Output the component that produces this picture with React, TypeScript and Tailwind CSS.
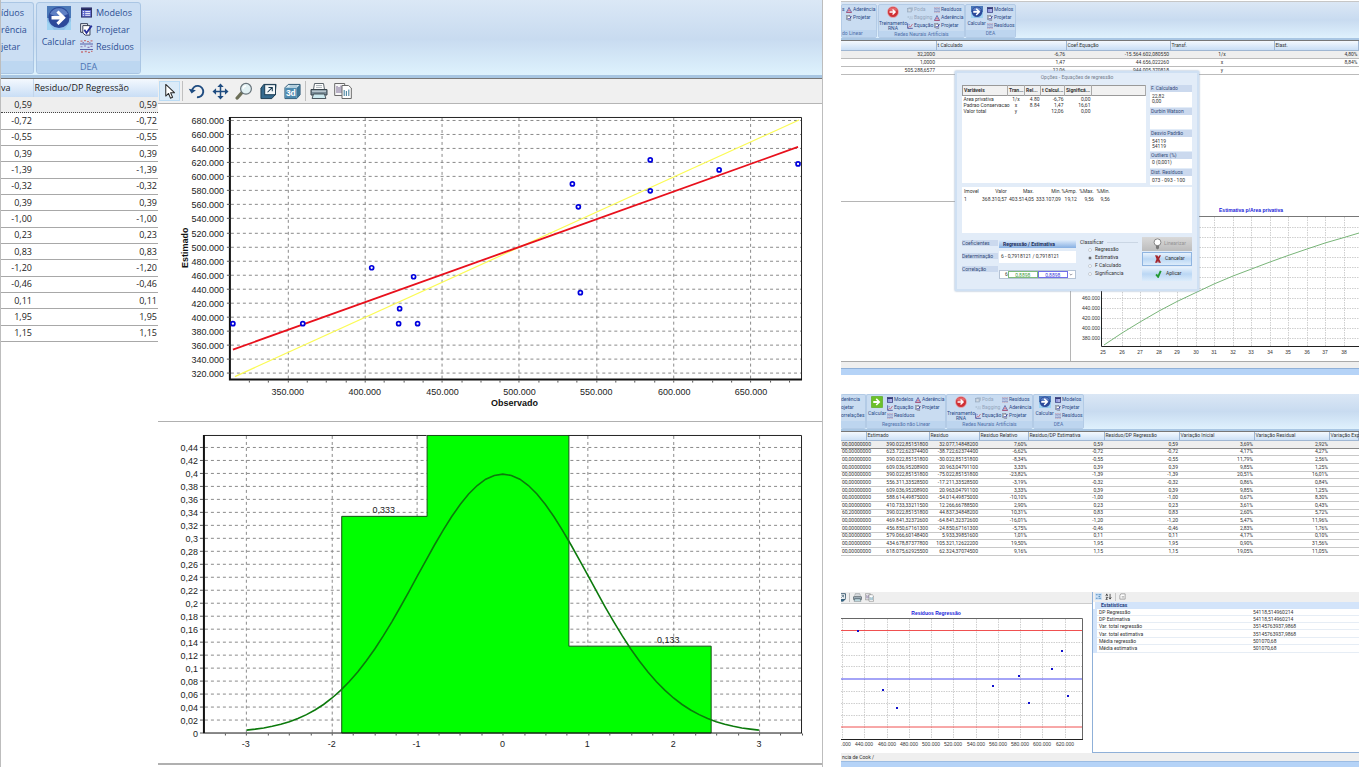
import React from "react";

type IconProps = { className?: string };

/* ---------- ribbon icons ---------- */

const ListIcon = ({ className }: IconProps) => (
  <svg viewBox="0 0 12 12" className={className} aria-hidden="true">
    <rect x="0.5" y="1" width="11" height="10" fill="#5a63c8" stroke="#2c2f66" />
    <rect x="1" y="1.5" width="10" height="1.8" fill="#20234f" />
    <path d="M2 5h1.4M2 7h1.4M2 9h1.4M4.6 5h5.4M4.6 7h5.4M4.6 9h5.4" stroke="#fff" strokeWidth="1" />
  </svg>
);

const ProjectIcon = ({ className }: IconProps) => (
  <svg viewBox="0 0 12 12" className={className} aria-hidden="true">
    <path d="M0.6 0.6h6.4v8h-6.4z" fill="#f5f7fb" stroke="#333c52" strokeWidth="0.9" />
    <path d="M2.6 2.4h6.6v8.8h-4.4l-2.2-2z" fill="#fff" stroke="#333c52" strokeWidth="0.9" />
    <path d="M4 6.2l2 3 4.8-6.8" fill="none" stroke="#26309a" strokeWidth="1.7" />
  </svg>
);

const ResidualIcon = ({ className }: IconProps) => (
  <svg viewBox="0 0 13 13" className={className} aria-hidden="true">
    <path d="M0 4h13M0 9.5h13" stroke="#5661a8" strokeWidth="1.1" />
    <path d="M0.5 1.2h2M4 0.7h2M7 1.6h2M10.5 0.8h2M1 12h2M4.8 11.5h2M8 12.3h2M11 11.4h1.5" stroke="#c6777e" strokeWidth="1.3" />
    <path d="M0.5 6.8h2M4 6h2M7.5 7.4h2M10.5 6.4h2M2.5 2.6h1.5M9 2.7h1.5" stroke="#8f7bb8" strokeWidth="1.1" />
  </svg>
);

const AdherenceIcon = ({ className }: IconProps) => (
  <svg viewBox="0 0 12 12" className={className} aria-hidden="true">
    <path d="M6 1L11 10.5H1z" fill="#e9cfe0" stroke="#45509c" strokeWidth="1.4" />
    <path d="M0.5 10.8h11" stroke="#b34466" strokeWidth="1.6" />
    <circle cx="6" cy="6.5" r="1.4" fill="#c23a4e" />
  </svg>
);

const EquationIcon = ({ className }: IconProps) => (
  <svg viewBox="0 0 12 12" className={className} aria-hidden="true">
    <path d="M1.3 0.5v10.2h10.2" fill="none" stroke="#3a3f8e" strokeWidth="1.5" />
    <path d="M2.5 9.5L5 6.5l2 1.4L11 2" fill="none" stroke="#c0405a" strokeWidth="1.3" />
    <path d="M3 3.2h3" stroke="#5a63c8" />
  </svg>
);

const GhostIcon = ({ className }: IconProps) => (
  <svg viewBox="0 0 12 12" className={className} aria-hidden="true">
    <rect x="1" y="3" width="8" height="7" fill="#b4c2d3" stroke="#8fa1b6" />
    <path d="M3 1.5h8v6" fill="none" stroke="#8fa1b6" />
    <path d="M3 5.5h4M3 7.5h4" stroke="#fff" />
  </svg>
);

const DotsIcon = ({ className }: IconProps) => (
  <svg viewBox="0 0 12 12" className={className} aria-hidden="true">
    <path d="M1 4h3M5.5 4h2M9 4h2M5 7.5h2M9 7.5h2" stroke="#98a8bc" strokeWidth="1.6" />
  </svg>
);

const ArrowTile = ({ className }: IconProps) => (
  <svg viewBox="0 0 24 24" className={className} aria-hidden="true">
    <rect width="24" height="24" fill="#8fc0e8" />
    <path d="M0 0h24v12H0z" fill="#4a78b8" />
    <path d="M0 24v-9l7 9zM24 24v-9l-7 9z" fill="#9fd3f2" />
    <circle cx="12" cy="11.5" r="10.6" fill="#2c4a9a" />
    <path d="M3 8a10 10 0 0 1 18 0q-9 5-18 0z" fill="#5f80c4" />
    <path d="M4.5 10h8.2L9.4 6.6l2.1-2.1 7.3 7.2-7.3 7.2-2.1-2.1 3.3-3.4H4.5z" fill="#fff" />
  </svg>
);

const GreenArrowTile = ({ className }: IconProps) => (
  <svg viewBox="0 0 24 24" className={className} aria-hidden="true">
    <rect x="0.5" y="0.5" width="23" height="23" rx="2" fill="#6cc02a" stroke="#4b9a1c" />
    <path d="M4.5 10.2h8.2L9.4 6.8l2.1-2.1 7.3 7.2-7.3 7.2-2.1-2.1 3.3-3.2H4.5z" fill="#fff" />
  </svg>
);

const RedArrowDisc = ({ className }: IconProps) => (
  <svg viewBox="0 0 24 24" className={className} aria-hidden="true">
    <circle cx="12" cy="12" r="11" fill="#cf2f34" stroke="#e7b6bb" strokeWidth="1.4" />
    <path d="M3 8a10 10 0 0 1 18 0q-9 5-18 0z" fill="#e5666a" />
    <path d="M5 10.6h7.8l-2.6-2.8 1.8-1.8 6.2 6-6.2 6-1.8-1.8 2.6-2.8H5z" fill="#fff" />
  </svg>
);

/* ---------- chart toolbar icons ---------- */

const CursorIcon = ({ className }: IconProps) => (
  <svg viewBox="0 0 16 18" className={className} aria-hidden="true">
    <path d="M4 1.5v12.4l3-2.8 2 5 2.3-1-2.1-4.8h4.1z" fill="#fff" stroke="#2b2b2b" strokeWidth="1.1" strokeLinejoin="round" />
  </svg>
);

const UndoIcon = ({ className }: IconProps) => (
  <svg viewBox="0 0 18 18" className={className} aria-hidden="true">
    <path d="M4.2 8.4A6 6 0 1 1 9.5 15" fill="none" stroke="#1f4c80" strokeWidth="2" />
    <path d="M0.8 6.2l3 5 4.6-3.6z" fill="#1f4c80" />
  </svg>
);

const MoveIcon = ({ className }: IconProps) => (
  <svg viewBox="0 0 18 18" className={className} aria-hidden="true">
    <path d="M9 3v12M3 9h12" stroke="#1f4c80" strokeWidth="1.6" />
    <path d="M9 0.5l3.4 3.8H5.6zM9 17.5l3.4-3.8H5.6zM0.5 9l3.8-3.4v6.8zM17.5 9l-3.8-3.4v6.8z" fill="#1f4c80" />
  </svg>
);

const LensIcon = ({ className }: IconProps) => (
  <svg viewBox="0 0 18 18" className={className} aria-hidden="true">
    <path d="M7 10.5L2.2 16" stroke="#6d6f58" strokeWidth="3.4" strokeLinecap="round" />
    <circle cx="11" cy="6.8" r="5.4" fill="#e2f1f4" stroke="#67737a" strokeWidth="1.2" />
    <path d="M8.2 6.8A2.8 2.8 0 0 1 11 4" fill="none" stroke="#fff" strokeWidth="1.4" />
  </svg>
);

const CubeIcon = ({ className }: IconProps) => (
  <svg viewBox="0 0 18 18" className={className} aria-hidden="true">
    <path d="M1 5.5l3-4h13l-1 11-3.5 4H1z" fill="#356a8e" stroke="#17384f" strokeWidth="1" />
    <rect x="5" y="1.8" width="11.4" height="10.6" fill="#f4f8fa" stroke="#17384f" />
    <path d="M8 9.8l4.6-4.6M9 4.8h4v4" fill="none" stroke="#17384f" strokeWidth="1.1" />
  </svg>
);

const Cube3dIcon = ({ className }: IconProps) => (
  <svg viewBox="0 0 18 18" className={className} aria-hidden="true">
    <path d="M1 5l3.5-3.5H17v11L13.5 16.5H1z" fill="#d9eaf2" stroke="#23506e" strokeWidth="1" />
    <path d="M13.5 5L17 1.5v11l-3.5 4z" fill="#3f7596" />
    <rect x="1.3" y="5" width="12.2" height="11" fill="#4f8bb0" />
    <text x="2" y="14" fontSize="9" fontWeight="700" fontFamily="Liberation Sans" fill="#fff">3d</text>
    <path d="M6 3.2h8" stroke="#7fa9c0" strokeWidth="0.9" />
  </svg>
);

const PrinterIcon = ({ className }: IconProps) => (
  <svg viewBox="0 0 18 18" className={className} aria-hidden="true">
    <path d="M4.5 1.5h9l1 6h-11z" fill="#fdfdfd" stroke="#5d666d" />
    <path d="M6 3.5h6M6 5.4h6" stroke="#98a3ab" strokeWidth="0.8" />
    <path d="M1 7.5h16v5.5H1z" fill="#7b8d99" stroke="#39454d" />
    <path d="M2 9.2h14" stroke="#d4e0e6" />
    <path d="M3.5 12h11l1.4 4.5H2.1z" fill="#cdeaf0" stroke="#39454d" strokeWidth="0.9" />
  </svg>
);

const PagesIcon = ({ className }: IconProps) => (
  <svg viewBox="0 0 18 18" className={className} aria-hidden="true">
    <path d="M0.7 1.5h10v12H0.7z" fill="#f7f7f7" stroke="#6a6a6a" />
    <path d="M3 4v7M5 5v6M7 3.5v7.5" stroke="#7a6a94" strokeWidth="1" />
    <path d="M8 3.5h6.5L17.3 6v10.5H8z" fill="#fff" stroke="#6a6a6a" />
    <path d="M10.2 14V8M12.4 14v-5M14.8 14V7.5" stroke="#4d87a2" strokeWidth="1.1" />
  </svg>
);

/* ---------- data ---------- */

const residuals = ["0,59", "-0,72", "-0,55", "0,39", "-1,39", "-0,32", "0,39", "-1,00", "0,23", "0,83", "-1,20", "-0,46", "0,11", "1,95", "1,15"];

const detailRows: string[][] = [
  ["00,00000000", "390.022,85151800", "32.077,14848200", "7,60%", "0,59", "0,59", "3,69%", "2,92%"],
  ["00,00000000", "623.722,62374400", "-38.722,62374400", "-6,62%", "-0,72", "-0,72", "4,17%", "4,27%"],
  ["00,00000000", "390.022,85151800", "-30.022,85151800", "-8,34%", "-0,55", "-0,55", "11,79%", "2,56%"],
  ["00,00000000", "609.036,95208900", "20.963,04791100", "3,33%", "0,39", "0,39", "9,85%", "1,25%"],
  ["00,00000000", "390.022,85151800", "-75.022,85151800", "-23,82%", "-1,39", "-1,39", "20,51%", "16,01%"],
  ["00,00000000", "556.311,33528500", "-17.211,33528500", "-3,19%", "-0,32", "-0,32", "0,86%", "0,84%"],
  ["00,00000000", "609.036,95208900", "20.963,04791100", "3,33%", "0,39", "0,39", "9,85%", "1,25%"],
  ["00,00000000", "588.614,49875000", "-54.014,49875000", "-10,10%", "-1,00", "-1,00", "0,67%", "8,30%"],
  ["00,00000000", "410.733,33211500", "12.266,66788500", "2,90%", "0,23", "0,23", "3,61%", "0,43%"],
  ["60,20000000", "390.022,85151800", "44.837,34848200", "10,31%", "0,83", "0,83", "2,60%", "5,72%"],
  ["00,00000000", "469.841,32372600", "-64.841,32372600", "-16,01%", "-1,20", "-1,20", "5,47%", "11,96%"],
  ["00,00000000", "456.850,67161300", "-24.850,67161300", "-5,75%", "-0,46", "-0,46", "2,83%", "1,76%"],
  ["00,00000000", "579.066,60148400", "5.933,39851600", "1,01%", "0,11", "0,11", "4,17%", "0,10%"],
  ["00,00000000", "434.678,87377800", "105.321,12622200", "19,50%", "1,95", "1,95", "0,90%", "31,56%"],
  ["00,00000000", "618.075,62925500", "62.324,37074500", "9,16%", "1,15", "1,15", "19,05%", "11,05%"],
];

const detailHeads = ["", "Estimado", "Residuo", "Residuo Relativo", "Residuo/DP Estimativa", "Residuo/DP Regressão", "Variação Inicial", "Variação Residual", "Variação Exp"];

const stats = [
  ["DP Regressão", "54118,514960214"],
  ["DP Estimativa", "54118,514960214"],
  ["Var. total regressão", "35145763937,9868"],
  ["Var. total estimativa", "35145763937,9868"],
  ["Média regressão", "501070,68"],
  ["Média estimativa", "501070,68"],
];

const range = (n: number) => Array.from({ length: n }, (_, i) => i);

/* ---------- charts ---------- */

const arial = "Liberation Sans, Arial, sans-serif";

const scatter = [
  [233, 324], [303, 324], [372, 268], [399, 324], [400, 309], [414, 277], [418, 324],
  [573, 184], [579, 207], [581, 293], [651, 160], [651, 191], [720, 170], [799, 164],
];

function AdherenceChart() {
  return (
    <svg viewBox="158 104 665 317" className="block h-auto w-full" role="img" aria-label="Estimado x Observado" fontFamily={arial} fontSize="9" fill="#222">
      <g stroke="#8a8a8a" strokeDasharray="3 3">
        {range(19).map((i) => <path key={i} d={`M231 ${Math.round(120 + i * 14.07) + 0.5}H802`} />)}
        {range(7).map((i) => <path key={i} d={`M${Math.round(287.5 + i * 77.3) + 0.5} 118V380`} />)}
      </g>
      <path d="M230 117.5H802.5V380" fill="none" stroke="#222" />
      <path d="M230 117V380H803" fill="none" stroke="#111" strokeWidth="2" />
      {range(19).map((i) => (
        <g key={i}>
          <path d={`M227 ${Math.round(120 + i * 14.07) + 0.5}h3`} stroke="#555" />
          <text x="224" y={Math.round(124 + i * 14.07)} textAnchor="end">{`${680 - i * 20}.000`}</text>
        </g>
      ))}
      {range(29).map((i) => <path key={i} d={`M${Math.round(249 + i * 19.32) + 0.5} 381v2`} stroke="#555" />)}
      {range(7).map((i) => <text key={i} x={Math.round(288 + i * 77.3)} y="395" textAnchor="middle">{`${350 + i * 50}.000`}</text>)}
      <path d="M235 377L800 120" stroke="#fbfb55" strokeWidth="1.2" />
      <path d="M233 350L799 147" stroke="#e8101c" strokeWidth="1.8" />
      {scatter.map(([x, y], i) => <circle key={i} cx={x} cy={y} r="2" fill="#fff" stroke="#0000dd" strokeWidth="1.7" />)}
      <text x="515" y="406" textAnchor="middle" fontWeight="700" fill="#111">Observado</text>
      <text x="0" y="0" transform="translate(188 248) rotate(-90)" textAnchor="middle" fontWeight="700" fill="#111">Estimado</text>
    </svg>
  );
}

const bell = range(61)
  .map((i) => {
    const z = -3 + i * 0.1;
    const d = Math.exp((-z * z) / 2) / Math.sqrt(2 * Math.PI);
    return `${i ? "L" : "M"}${(503.3 + z * 85.5).toFixed(1)} ${(733.5 - d * 650).toFixed(1)}`;
  })
  .join("");

function DistributionChart() {
  return (
    <svg viewBox="158 422 665 342" className="block h-auto w-full" role="img" aria-label="Distribuição dos resíduos" fontFamily={arial} fontSize="9" fill="#222">
      <g stroke="#8a8a8a" strokeDasharray="3 3">
        {range(22).map((i) => <path key={i} d={`M205 ${720.5 - i * 13}H802`} />)}
        {range(7).map((i) => <path key={i} d={`M${Math.round(246 + i * 85.6) + 0.5} 436V733`} />)}
      </g>
      <path d="M342 733.5V516.5H427.5V435.5H569.5V646.5H712V733.5z" fill="#00ff00" stroke="#145014" />
      <path d="M204 435.5H427M569 435.5H802.5V733.5" fill="none" stroke="#222" />
      <path d="M204 435V733.5" stroke="#111" strokeWidth="2" />
      <path d="M203 733.5H803" stroke="#111" strokeWidth="1" />
      {range(23).map((i) => (
        <g key={i}>
          <path d={`M200 ${733.5 - i * 13}h3`} stroke="#555" />
          <text x="198" y={737 - i * 13} textAnchor="end">{String(Number((i * 0.02).toFixed(2))).replace(".", ",")}</text>
        </g>
      ))}
      {range(28).map((i) => <path key={i} d={`M${Math.round(225 + i * 21.4) + 0.5} 734v2`} stroke="#555" />)}
      {range(7).map((i) => <text key={i} x={Math.round(246 + i * 85.6)} y="748" textAnchor="middle">{i - 3}</text>)}
      <path d={bell} fill="none" stroke="#0c7a0c" strokeWidth="1.6" />
      <text x="384" y="513" textAnchor="middle">0,333</text>
      <text x="669" y="643" textAnchor="middle">0,133</text>
    </svg>
  );
}

function EstimateChart() {
  return (
    <svg viewBox="1071 75 288 286" className="block h-auto w-full" role="img" aria-label="Estimativa p/Area privativa" fontFamily={arial} fontSize="5" fill="#333">
      <g stroke="#cfcfcf" strokeDasharray="1.5 1">
        {range(12).map((i) => <path key={i} d={`M1102 ${Math.round(338 - i * 10.1) + 0.5}H1359`} />)}
        {range(13).map((i) => <path key={i} d={`M${Math.round(1121.5 + i * 18.5) + 0.5} 217V346`} />)}
      </g>
      <path d="M1101 216.5H1359" stroke="#777" />
      <path d="M1101.5 216V346.5H1359" fill="none" stroke="#222" />
      {range(5).map((i) => <text key={i} x="1100" y={Math.round(340 - i * 10.1)} textAnchor="end">{`${380 + i * 20}.000`}</text>)}
      {range(14).map((i) => <text key={i} x={Math.round(1103 + i * 18.5)} y="354" textAnchor="middle">{25 + i}</text>)}
      <path d="M1104 345L1122 333L1140 322L1159 311L1177 301.5L1196 292.5L1214 284L1233 276L1251.5 269L1270 262L1288 255.5L1307 249L1325 243L1344 237.5L1359 233" fill="none" stroke="#79b579" />
      <text x="1251" y="212" textAnchor="middle" fontWeight="700" fill="#2020d8">Estimativa p/Area privativa</text>
    </svg>
  );
}

const residualDots = [[858, 631], [883, 690], [897, 708], [993, 686], [1019, 676], [1029, 703], [1052, 669], [1062, 651], [1068, 696]];

function ResidualChart() {
  return (
    <svg viewBox="841 604 251 149" className="block h-auto w-full" role="img" aria-label="Resíduos Regressão" fontFamily={arial} fontSize="5" fill="#333">
      <g stroke="#cfcfcf" strokeDasharray="1.5 1">
        {[642.5, 655.5, 666.5, 691.5, 703.5, 715.5].map((y) => <path key={y} d={`M841 ${y}H1083`} />)}
        {range(11).map((i) => <path key={i} d={`M${Math.round(842 + i * 22.25) + 0.5} 619V739`} />)}
      </g>
      <path d="M841 618.5H1082.5V739" fill="none" stroke="#666" />
      <path d="M841 739.5H1083" stroke="#222" />
      <path d="M841 630.5H1082M841 727H1082" stroke="#f05050" />
      <path d="M841 679H1082" stroke="#4a4af0" strokeWidth="1.2" />
      {residualDots.map(([x, y], i) => <rect key={i} x={x - 1} y={y - 1} width="2" height="2" fill="#1010cc" />)}
      {range(11).map((i) => <text key={i} x={i === 0 ? 841 : Math.round(842 + i * 22.25)} y="746" textAnchor={i === 0 ? "start" : "middle"}>{i === 0 ? ".000" : `${420 + i * 20}.000`}</text>)}
      <text x="936" y="615" textAnchor="middle" fontWeight="700" fill="#2020d8">Resíduos Regressão</text>
    </svg>
  );
}

/* ---------- compact ribbon ---------- */

type Entry = { icon?: React.ComponentType<IconProps>; label: string; off?: boolean };

function Entries({ items, className }: { items: Entry[]; className: string }) {
  return (
    <div className={`flex shrink-0 flex-col ${className}`}>
      {items.map(({ icon: Icon, label, off }) => (
        <button key={label} disabled={off} className={`flex h-2 items-center gap-px whitespace-nowrap text-left ${off ? "text-[#94a6bd]" : "text-[#2b4a86]"}`}>
          {Icon && <Icon className="size-[6px] shrink-0" />}
          {label}
        </button>
      ))}
    </div>
  );
}

function Group({ title, className, children }: { title: string; className: string; children: React.ReactNode }) {
  return (
    <section className={`flex shrink-0 flex-col overflow-hidden rounded-[2px] border border-[#b3cbe6] bg-[#c9dcf1] ${className}`}>
      <div className="flex h-[27px] pt-px">{children}</div>
      <h2 className="h-[7px] whitespace-nowrap bg-[#bdd5ef] leading-[6px] text-[#5070aa]">{title}</h2>
    </section>
  );
}

function BigButton({ icon: Icon, label, className }: { icon: React.ComponentType<IconProps>; label: string; className: string }) {
  return (
    <button className={`flex shrink-0 flex-col items-center text-center leading-[5px] text-[#2b4a86] ${className}`}>
      <Icon className="mb-[3px] size-3" />
      {label}
    </button>
  );
}

const modelos: Entry = { icon: ListIcon, label: "Modelos" };
const projetar: Entry = { icon: ProjectIcon, label: "Projetar" };
const residuos: Entry = { icon: ResidualIcon, label: "Resíduos" };
const aderencia: Entry = { icon: AdherenceIcon, label: "Aderência" };
const equacao: Entry = { icon: EquationIcon, label: "Equação" };

function NeuralAndDea() {
  return (
    <>
      <Group title="Redes Neurais Artificiais" className="w-[87px] text-center">
        <BigButton icon={RedArrowDisc} label="Treinamento RNA" className="w-[28px]" />
        <Entries className="w-[27px]" items={[{ icon: GhostIcon, label: "Poda", off: true }, { icon: DotsIcon, label: "Bagging", off: true }, equacao]} />
        <Entries className="w-[30px]" items={[residuos, aderencia, projetar]} />
      </Group>
      <Group title="DEA" className="w-[51px] text-center">
        <BigButton icon={ArrowTile} label="Calcular" className="w-[21px]" />
        <Entries className="w-[28px]" items={[modelos, projetar, residuos]} />
      </Group>
    </>
  );
}

const compactRibbon = "flex shrink-0 overflow-hidden border-b-2 border-[#a9c6e3] bg-linear-to-b from-[#dbe7f5] via-[#c8dbf0] to-[#dff1fd] text-[5px] [font-family:Roboto,sans-serif]";
const compactTable = "w-full table-fixed border-collapse text-[5px] text-[#333] [font-family:Roboto,sans-serif]";
const compactHead = "h-[9px] border-b border-r border-[#9fb6d2] p-0 pl-px text-left leading-[7px] font-normal whitespace-nowrap";

/* ---------- regression dialog ---------- */

function SideField({ label, lines, className }: { label: string; lines: string[]; className: string }) {
  return (
    <div>
      <h3 className="h-[7px] bg-[#cbd9ee] px-px leading-[7px] text-[#334a78]">{label}</h3>
      <div className={`bg-white px-[2px] leading-[5px] ${className}`}>
        {lines.map((l, i) => <div key={i}>{l}</div>)}
      </div>
    </div>
  );
}

function RegressionDialog() {
  return (
    <div role="dialog" aria-label="Opções - Equações de regressão" className="absolute left-[114px] top-[71px] flex h-[220px] w-[244px] flex-col border-2 border-[#cfe0f3] bg-[#e2ecf8] px-[5px] pb-2 text-[5px] text-[#333] shadow-[0_0_2px_#8ba6c4] [font-family:Roboto,sans-serif]">
      <h2 className="h-[13px] text-center leading-[9px] text-[#76808e]">Opções - Equações de regressão</h2>
      <div className="flex gap-1">
        <div className="h-[98px] w-[184px] bg-white">
          <table className="w-full table-fixed border-collapse leading-[6px]">
            <colgroup>
              <col className="w-[45px]" /><col className="w-[17px]" /><col className="w-4" /><col className="w-[24px]" /><col className="w-[27px]" /><col />
            </colgroup>
            <thead>
              <tr className="h-[10px] border border-[#999] bg-[#f1f1f1] text-left">
                {["Variáveis", "Tran...", "Rel...", "t Calcul...", "Significá...", ""].map((h) => <th key={h} className="whitespace-nowrap border-r border-[#aaa] p-0 pl-px">{h}</th>)}
              </tr>
            </thead>
            <tbody className="[&_td]:whitespace-nowrap [&_td]:px-px [&_td]:py-0">
              {[["Area privativa", "1/x", "4.80", "-6,76", "0,00"], ["Padrao Conservacao", "x", "8.84", "1,47", "16,61"], ["Valor total", "y", "", "12,06", "0,00"]].map((r) => (
                <tr key={r[0]}>
                  <td>{r[0]}</td><td className="text-center">{r[1]}</td><td className="text-right">{r[2]}</td><td className="text-right">{r[3]}</td><td className="text-right">{r[4]}</td><td />
                </tr>
              ))}
            </tbody>
          </table>
        </div>
        <div className="flex flex-1 flex-col gap-px whitespace-nowrap">
          <SideField label="F. Calculado" lines={["22,82", "0,00"]} className="h-[15px] pt-[2px]" />
          <SideField label="Durbin Watson" lines={[]} className="h-[14px]" />
          <SideField label="Desvio Padrão" lines={["54119", "54119"]} className="h-[14px] pt-[2px]" />
          <SideField label="Outliers (%)" lines={["0   (0,001)"]} className="h-[9px] pt-px" />
          <SideField label="Dist. Resíduos" lines={["073 - 093 - 100"]} className="h-[9px] pt-[2px]" />
        </div>
      </div>
      <div className="mt-[2px] h-[50px] bg-white pl-[2px] pt-px">
        <table className="table-fixed text-right leading-[7px]">
          <colgroup>
            <col className="w-[10px]" /><col className="w-[28px]" /><col className="w-[27px]" /><col className="w-[27px]" /><col className="w-4" /><col className="w-[17px]" /><col className="w-4" />
          </colgroup>
          <thead><tr>{["Imovel", "Valor", "Max.", "Min.", "%Amp.", "%Max.", "%Min."].map((h) => <th key={h} className="p-0 font-normal first:text-left">{h}</th>)}</tr></thead>
          <tbody><tr>{["1", "368.310,57", "403.514,05", "333.107,09", "19,12", "9,56", "9,56"].map((v, i) => <td key={i} className="p-0 pt-px first:text-left">{v}</td>)}</tr></tbody>
        </table>
      </div>
      <div className="flex flex-1 pt-1">
        <div className="flex w-9 flex-col gap-[7px] pt-[3px] text-[#334a78] [&>span]:bg-[#cbd9ee] [&>span]:leading-[6px]">
          <span>Coeficientes</span><span>Determinação</span><span>Correlação</span>
        </div>
        <div className="ml-px flex w-[77px] flex-col gap-[3px] pt-[3px]">
          <div className="h-2 bg-linear-to-b from-[#dfecfb] to-[#86afe2] pl-1 font-bold leading-2 text-[#1c2f5c]">Regressão / Estimativa</div>
          <div className="h-3 bg-white px-[2px] leading-[10px]">6 -  0,7918121  /  0,7918121</div>
          <div className="mt-1 flex h-[9px] items-center border border-[#b5c3d5] bg-white pl-[5px]">
            <span>6</span>
            <input aria-label="Correlação regressão" defaultValue="0,8898" className="h-[7px] w-[30px] border border-[#7cba7c] text-center leading-[5px] text-[#3c9a3c]" />
            <input aria-label="Correlação estimativa" defaultValue="0,8898" className="h-[7px] w-[30px] border border-[#6f6fe8] text-center leading-[5px] text-[#3838d8]" />
            <button aria-label="Abrir lista" className="flex flex-1 items-center justify-center">
              <svg viewBox="0 0 6 4" className="h-[3px] w-1"><path d="M1 1l2 2 2-2" fill="none" stroke="#667" /></svg>
            </button>
          </div>
        </div>
        <fieldset className="ml-1 flex w-[58px] flex-col pt-px">
          <legend className="float-left flex w-full items-center gap-1 leading-[8px]">Classificar<span className="h-px flex-1 bg-[#cad6e4]" /></legend>
          {["Regressão", "Estimativa", "F Calculado", "Significancia"].map((l) => (
            <label key={l} className="flex h-2 items-center gap-[3px] pl-2">
              <input type="radio" name="classificar" defaultChecked={l === "Estimativa"} className="size-1 appearance-none rounded-full border border-[#c5cdd6] bg-white checked:bg-[#444]" />
              {l}
            </label>
          ))}
        </fieldset>
        <div className="ml-auto flex w-[50px] flex-col gap-px">
          <button disabled className="flex h-[14px] items-center gap-[2px] bg-linear-to-b from-[#d9d9d9] to-[#bcbcbc] pl-[11px] text-[#959595]">
            <svg viewBox="0 0 10 14" className="h-3 w-[9px]"><circle cx="5" cy="5" r="4" fill="#fff" stroke="#777" /><path d="M3.2 8.8h3.6v3.2L5 13.4 3.2 12z" fill="#777" /></svg>
            Linearizar
          </button>
          <button className="flex h-[14px] items-center gap-1 border border-[#8fb4e0] bg-linear-to-b from-[#e9f3fd] via-[#bbd7f4] to-[#dcecfb] pl-3">
            <svg viewBox="0 0 8 10" className="h-2 w-[6px]"><path d="M0 0l3.5.4.7 2.2L5.5.3 8 0 5.6 5 8 10H4.8L4 7.2 3 10H0l2-5z" fill="#a3242c" /></svg>
            Cancelar
          </button>
          <button className="flex h-[14px] items-center gap-1 bg-linear-to-b from-[#e9f3fd] via-[#bbd7f4] to-[#dcecfb] pl-[13px]">
            <svg viewBox="0 0 8 10" className="h-2 w-[7px]"><path d="M1 5.5l2.5 3L6.8 1" fill="none" stroke="#239a35" strokeWidth="2.4" /></svg>
            Aplicar
          </button>
        </div>
      </div>
    </div>
  );
}

/* ---------- panels ---------- */

function MainPanel() {
  const side = "flex h-[17px] items-center gap-[3px] whitespace-nowrap";
  const tool = "flex h-[21px] w-6 items-center justify-center";
  return (
    <main className="min-w-0 border-x border-[#bdbdbd] [font-family:'Open_Sans',sans-serif]">
      <header className="flex h-[79px] overflow-hidden border-b border-[#777] bg-linear-to-b from-[#dbe8f6] via-[#c8dbf0] to-[#e0f4fe] pt-[2px] text-[9px] text-[#2d4f94] shadow-[inset_0_-3px_0_#a8c6e2]">
        <section className="flex h-[72px] w-[33px] flex-col overflow-hidden rounded-r-[3px] border border-l-0 border-[#aac6e4] bg-[#cbdef3]">
          <div className="flex h-[58px] flex-col items-start pt-px [&>button]:h-[17px]">
            <button aria-label="Resíduos">íduos</button>
            <button aria-label="Aderência">rência</button>
            <button aria-label="Projetar">jetar</button>
          </div>
          <div className="flex-1 bg-[#bdd7f1]" />
        </section>
        <section className="ml-[2px] flex h-[72px] w-[105px] flex-col overflow-hidden rounded-[3px] border border-[#aac6e4] bg-[#cbdef3]">
          <div className="flex h-[58px]">
            <button className="flex w-[43px] flex-col items-center pt-[3px]">
              <ArrowTile className="mb-[6px] size-6" />
              <span className="leading-3">Calcular</span>
            </button>
            <div className="flex flex-col pt-px">
              <button className={side}><ListIcon className="mx-px size-[11px]" />Modelos</button>
              <button className={side}><ProjectIcon className="size-[13px]" />Projetar</button>
              <button className={side}><ResidualIcon className="size-[13px]" />Resíduos</button>
            </div>
          </div>
          <h2 className="flex-1 bg-[#bdd7f1] text-center leading-[12px] text-[#4c74b4]">DEA</h2>
        </section>
      </header>
      <div className="flex items-start">
        <table className="h-[263px] w-[157px] table-fixed border-collapse text-right text-[9px] leading-[14px] text-[#222]">
          <thead>
            <tr className="h-[18px] bg-linear-to-b from-[#f4f9fe] to-[#c9def5]">
              <th className="w-8 whitespace-nowrap border-r border-[#c3d5ea] p-0 text-left font-normal">va</th>
              <th className="whitespace-nowrap p-0 pl-px text-left font-normal">Residuo/DP Regressão</th>
            </tr>
          </thead>
          <tbody>
            {residuals.map((v, i) => (
              <tr key={i} className={i === 0 ? "border-b border-dotted border-[#444] bg-[#eeeeee]" : "border-b border-[#a8a8a8]"}>
                <td className="p-0 pr-px">{v}</td>
                <td className="p-0 pr-px">{v}</td>
              </tr>
            ))}
          </tbody>
        </table>
        <div className="min-w-0 flex-1">
          <div role="toolbar" className="flex h-[25px] items-center border-b border-[#b5b5b5] bg-[#f0f0f0] pl-px">
            <button aria-label="Selecionar" className="flex h-5 w-[21px] items-center justify-center border border-[#bcdcf5] bg-[#dcebf8]"><CursorIcon className="h-[17px] w-[15px]" /></button>
            <span className="ml-[2px] mr-px h-5 w-px bg-[#c0c0c0]" />
            <button aria-label="Desfazer" className={tool}><UndoIcon className="size-[17px]" /></button>
            <button aria-label="Mover" className={tool}><MoveIcon className="size-[17px]" /></button>
            <button aria-label="Zoom" className={tool}><LensIcon className="size-[18px]" /></button>
            <button aria-label="Profundidade" className={tool}><CubeIcon className="size-[17px]" /></button>
            <button aria-label="Visão 3d" className={tool}><Cube3dIcon className="size-[17px]" /></button>
            <span className="mx-px h-5 w-px bg-[#c0c0c0]" />
            <button aria-label="Imprimir" className={tool}><PrinterIcon className="size-[18px]" /></button>
            <button aria-label="Copiar" className={tool}><PagesIcon className="size-[18px]" /></button>
          </div>
          <div className="border-b border-[#b0b0b0]"><AdherenceChart /></div>
          <div className="border-b-2 border-[#b0b0b0]"><DistributionChart /></div>
        </div>
      </div>
    </main>
  );
}

function RegressionPanel() {
  return (
    <section className="relative">
      <div className="h-[2px] border-b border-[#c6c6c6]" />
      <div className={`${compactRibbon} h-[38px] pt-[2px]`}>
        <Group title="do Linear" className="w-[36px]">
          <Entries className="w-1" items={[{ label: "s" }]} />
          <Entries className="w-[30px]" items={[aderencia, projetar]} />
        </Group>
        <div className="w-px" />
        <NeuralAndDea />
      </div>
      <div className="h-px bg-[#777]" />
      <table className={`${compactTable} leading-[6px]`}>
        <colgroup><col className="w-[95px]" /><col className="w-[130px]" /><col className="w-[104px]" /><col className="w-[104px]" /><col /></colgroup>
        <thead>
          <tr className="bg-linear-to-b from-[#f4f9fe] to-[#c9def5]">
            {["", "t Calculado", "Coef.Equação", "Transf.", "Elast."].map((h) => <th key={h} className={compactHead}>{h}</th>)}
          </tr>
        </thead>
        <tbody>
          {[["32,2000", "-6,76", "-15.564.602,080550", "1/x", "4,80%"], ["1,0000", "1,47", "44.656,022260", "x", "8,84%"], ["505.288,6577", "12,06", "944.005,370818", "y", ""]].map((r, i) => (
            <tr key={r[0]} className={`h-2 border-b border-[#bbb] text-right ${i === 0 ? "bg-[#eee]" : ""}`}>
              {r.map((v, j) => <td key={j} className={j === 3 ? "p-0 text-center" : "p-0 pr-px"}>{v}</td>)}
            </tr>
          ))}
        </tbody>
      </table>
      <div className="grid grid-cols-[230fr_288fr] border-b border-[#aaa]">
        <div className="flex pt-[126px]"><div className="flex-1 border-r border-t border-[#b5b5b5]" /></div>
        <EstimateChart />
      </div>
      <div className="h-[6px] bg-[#efefef]" />
      <div className="h-[7px] border-t border-[#8fb0d8] bg-[#b5d3f7]" />
      <RegressionDialog />
    </section>
  );
}

function ResidualPanel() {
  return (
    <section className="mt-[19px]">
      <div className={`${compactRibbon} h-[37px]`}>
        <Group title="" className="w-[25px] border-l-0">
          <Entries className="w-6" items={[{ label: "derência" }, { label: "ojetar" }, { label: "orrelações" }]} />
        </Group>
        <Group title="Regressão não Linear" className="w-[80px] text-center">
          <BigButton icon={GreenArrowTile} label="Calcular" className="w-5" />
          <Entries className="w-[28px]" items={[modelos, equacao, residuos]} />
          <Entries className="w-[30px]" items={[aderencia, projetar]} />
        </Group>
        <NeuralAndDea />
      </div>
      <div className="h-px bg-[#777]" />
      <table className={`${compactTable} h-[124px] leading-[5px]`}>
        <colgroup>
          <col className="w-[25px]" /><col className="w-[6px]" /><col className="w-[57px]" /><col className="w-[50px]" /><col className="w-[49px]" /><col className="w-[76px]" /><col className="w-[75px]" /><col className="w-[75px]" /><col className="w-[75px]" /><col />
        </colgroup>
        <thead>
          <tr className="bg-linear-to-b from-[#f4f9fe] to-[#c9def5]">
            {detailHeads.map((h, i) => <th key={h} colSpan={i === 1 ? 2 : 1} className={compactHead}>{h}</th>)}
          </tr>
        </thead>
        <tbody>
          {detailRows.map((r, i) => (
            <tr key={i} className={`border-b text-right ${i === 0 ? "border-[#888] bg-[#eee]" : "border-[#c8c8c8]"}`}>
              {r.map((v, j) => <td key={j} colSpan={j === 0 ? 2 : 1} className="p-0 pr-px">{v}</td>)}
              <td className="p-0" />
            </tr>
          ))}
        </tbody>
      </table>
      <div className="mt-[36px] grid grid-cols-[251fr_267fr]">
        <div className="min-w-0">
          <div role="toolbar" className="flex h-3 items-center gap-[3px] border-b border-[#ccc] bg-[#efefef]">
            <button aria-label="Visão 3d" className="h-[9px] w-[5px] overflow-hidden"><CubeIcon className="-ml-1 size-[9px]" /></button>
            <span className="h-[9px] w-px bg-[#c0c0c0]" />
            <button aria-label="Imprimir"><PrinterIcon className="size-[9px]" /></button>
            <button aria-label="Copiar"><PagesIcon className="size-[9px]" /></button>
          </div>
          <ResidualChart />
        </div>
        <div className="flex min-w-0 flex-col border-b border-l border-[#8fb0d8]">
          <div role="toolbar" className="flex h-[10px] items-center gap-[3px] bg-[#efefef] px-[2px]">
            <button aria-label="Por categoria" className="bg-[#cfe3f8]"><svg viewBox="0 0 8 8" className="size-[7px]"><path d="M1 2h2M1 6h2M4 2h3M4 6h3M4 4h2" stroke="#4a86b8" /></svg></button>
            <button aria-label="Ordem alfabética"><svg viewBox="0 0 8 8" className="size-[7px]"><path d="M1 3.5L2 1l1 2.5M1 5h2L1 7.3h2M5.8 1v5.5M4.5 5l1.3 2 1.4-2" fill="none" stroke="#333" strokeWidth="0.9" /></svg></button>
            <span className="h-2 w-px bg-[#c8c8c8]" />
            <button aria-label="Páginas"><svg viewBox="0 0 8 8" className="size-[7px]"><path d="M2 1h5v6H1V3z" fill="#fff" stroke="#888" strokeWidth="0.8" /><path d="M3 4h3M3 5.5h3" stroke="#888" strokeWidth="0.6" /></svg></button>
          </div>
          <table className={`${compactTable} h-[51px] leading-[6px]`}>
            <colgroup><col className="w-[158px]" /><col /></colgroup>
            <thead>
              <tr className="h-[7px] bg-[#d3e4fa] text-left"><th colSpan={2} className="p-0 pl-[6px] text-[#1e4080]">Estatísticas</th></tr>
            </thead>
            <tbody>
              {stats.map(([n, v]) => (
                <tr key={n} className="border-b border-[#e6edf5]">
                  <td className="border-l-4 border-[#d3e4fa] p-0 pl-[2px]">{n}</td>
                  <td className="p-0">{v}</td>
                </tr>
              ))}
            </tbody>
          </table>
        </div>
      </div>
      <div className="flex h-2 items-center bg-[#efefef] text-[5px] leading-[6px] text-[#333] [font-family:Roboto,sans-serif]"><a href="#cook" className="pl-px">ncia de Cook /</a></div>
      <div className="h-[6px] border-t border-[#9cbce2] bg-[#b5d3f7]" />
    </section>
  );
}

export default function App() {
  return (
    <div className="grid grid-cols-[823fr_518fr] gap-[18px] bg-white">
      <MainPanel />
      <aside className="min-w-0 overflow-hidden">
        <RegressionPanel />
        <ResidualPanel />
      </aside>
    </div>
  );
}
